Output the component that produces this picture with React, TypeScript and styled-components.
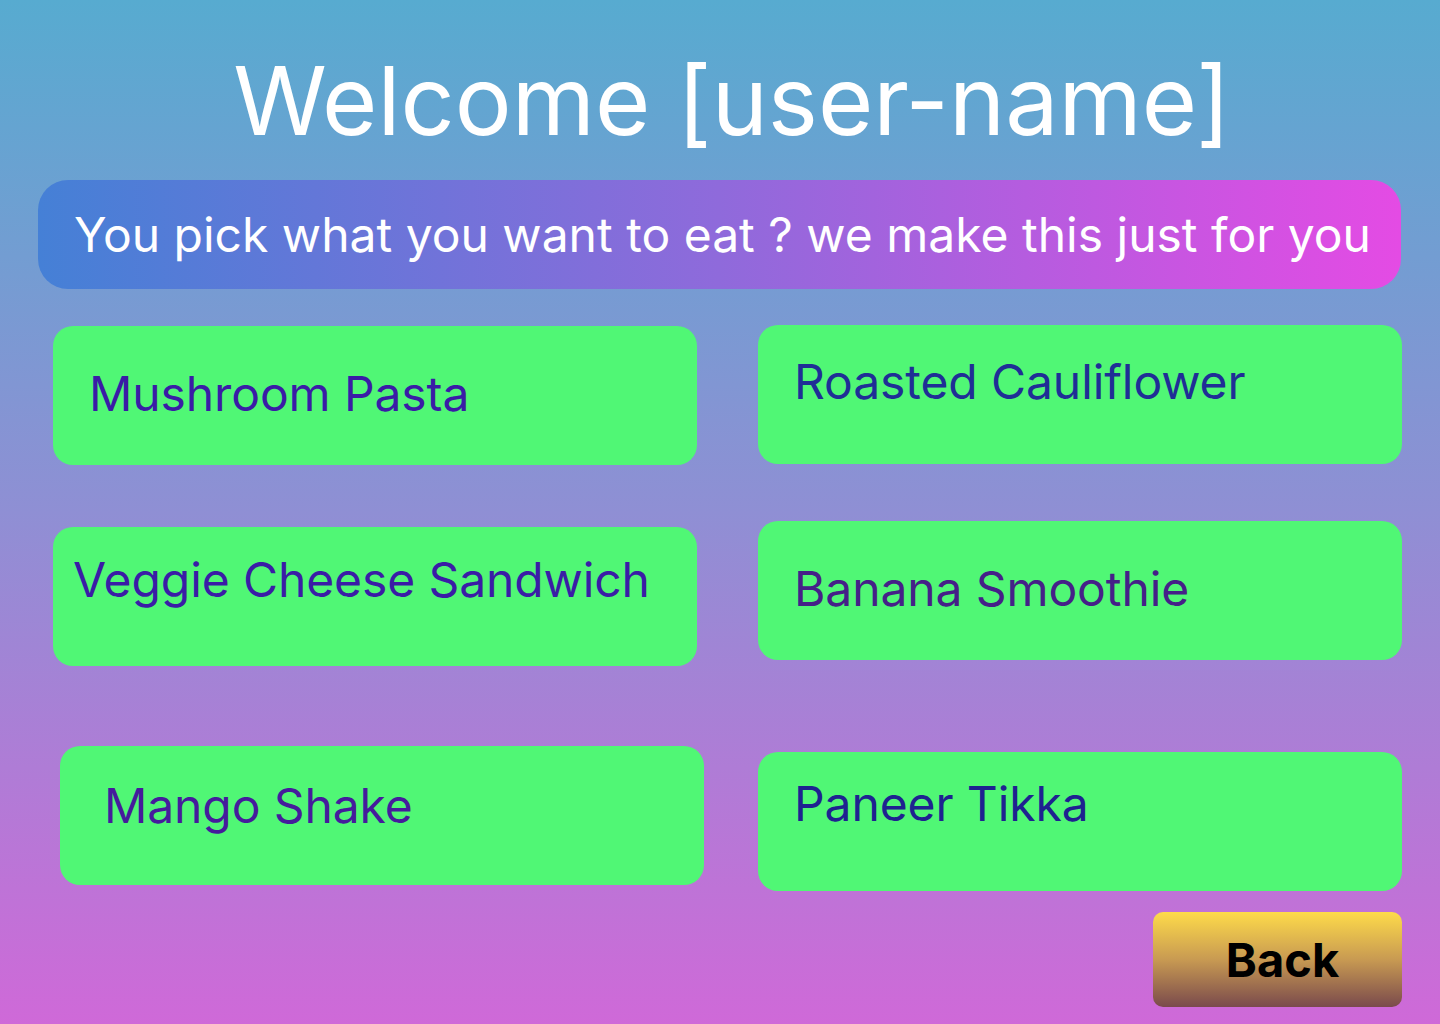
import React from "react";
import styled, { createGlobalStyle } from "styled-components";

const Global = createGlobalStyle`
  html, body { margin: 0; padding: 0; }
  body { font-family: Inter, "Noto Sans", sans-serif; }
  * { box-sizing: border-box; }
`;

const Page = styled.main`
  width: 1440px;
  min-height: 1024px;
  padding-top: 53px;
  display: flex;
  flex-direction: column;
  background: linear-gradient(180deg, #57abd0 0%, #8f8fd4 50%, #cf69d8 100%);
  font-family: Inter, "Noto Sans", sans-serif;
`;

const Title = styled.h1`
  margin: 0;
  padding-left: 24px;
  text-align: center;
  font-size: 95px;
  line-height: 1;
  font-weight: 400;
  color: #ffffff;
`;

const Banner = styled.div`
  margin: 32px 39px 36px 38px;
  height: 109px;
  display: flex;
  align-items: center;
  padding-left: 36px;
  border-radius: 30px;
  background: linear-gradient(90deg, #4580d6 0%, #8f6adb 50%, #e44be4 100%);
  color: #ffffff;
  font-size: 48px;
  line-height: 1;
  white-space: nowrap;
`;

const Grid = styled.section`
  display: grid;
  grid-template-columns: 644px 644px;
  column-gap: 61px;
  padding-left: 53px;
  align-items: start;
`;

const Card = styled.button<{ $mt: number; $ml?: number; $pt: number; $pl: number; $color: string }>`
  all: unset;
  box-sizing: border-box;
  display: flex;
  align-items: flex-start;
  justify-content: flex-start;
  width: 644px;
  height: 139px;
  margin-top: ${(p) => p.$mt}px;
  margin-left: ${(p) => p.$ml ?? 0}px;
  padding: ${(p) => p.$pt}px 0 0 ${(p) => p.$pl}px;
  border-radius: 20px;
  background: #50f775;
  color: ${(p) => p.$color};
  font-family: Inter, "Noto Sans", sans-serif;
  font-size: 48px;
  line-height: 1;
  letter-spacing: -0.1px;
  cursor: pointer;
  white-space: nowrap;
`;

const Footer = styled.div`
  display: flex;
  justify-content: flex-end;
  padding-right: 38px;
  margin-top: 21px;
`;

const BackButton = styled.button`
  all: unset;
  box-sizing: border-box;
  width: 249px;
  height: 95px;
  display: flex;
  align-items: center;
  justify-content: center;
  padding-left: 10px;
  border-radius: 10px;
  background: linear-gradient(180deg, #fedb4a 0%, #c89a52 50%, #7a4a4c 100%);
  color: #000000;
  font-family: Inter, "Noto Sans", sans-serif;
  font-weight: 700;
  font-size: 47px;
  line-height: 1;
  cursor: pointer;
`;

type Item = { name: string; mt: number; ml?: number; pt: number; pl: number; color: string };

const items: Item[] = [
  { name: "Mushroom Pasta", mt: 1, pt: 44, pl: 36, color: "#3a1ca6" },
  { name: "Roasted Cauliflower", mt: 0, pt: 33, pl: 36, color: "#1f2e96" },
  { name: "Veggie Cheese Sandwich", mt: 62, pt: 29, pl: 20, color: "#3a1ca6" },
  { name: "Banana Smoothie", mt: 56, pt: 44, pl: 36, color: "#452088" },
  { name: "Mango Shake", mt: 80, ml: 7, pt: 36, pl: 44, color: "#451c9c" },
  { name: "Paneer Tikka", mt: 86, pt: 28, pl: 36, color: "#1e2290" },
];

export default function App() {
  return (
    <>
      <Global />
      <Page>
        <Title>Welcome [user-name]</Title>
        <Banner>You pick what you want to eat ? we make this just for you</Banner>
        <Grid>
          {items.map((it) => (
            <Card key={it.name} $mt={it.mt} $ml={it.ml} $pt={it.pt} $pl={it.pl} $color={it.color}>
              {it.name}
            </Card>
          ))}
        </Grid>
        <Footer>
          <BackButton>Back</BackButton>
        </Footer>
      </Page>
    </>
  );
}
